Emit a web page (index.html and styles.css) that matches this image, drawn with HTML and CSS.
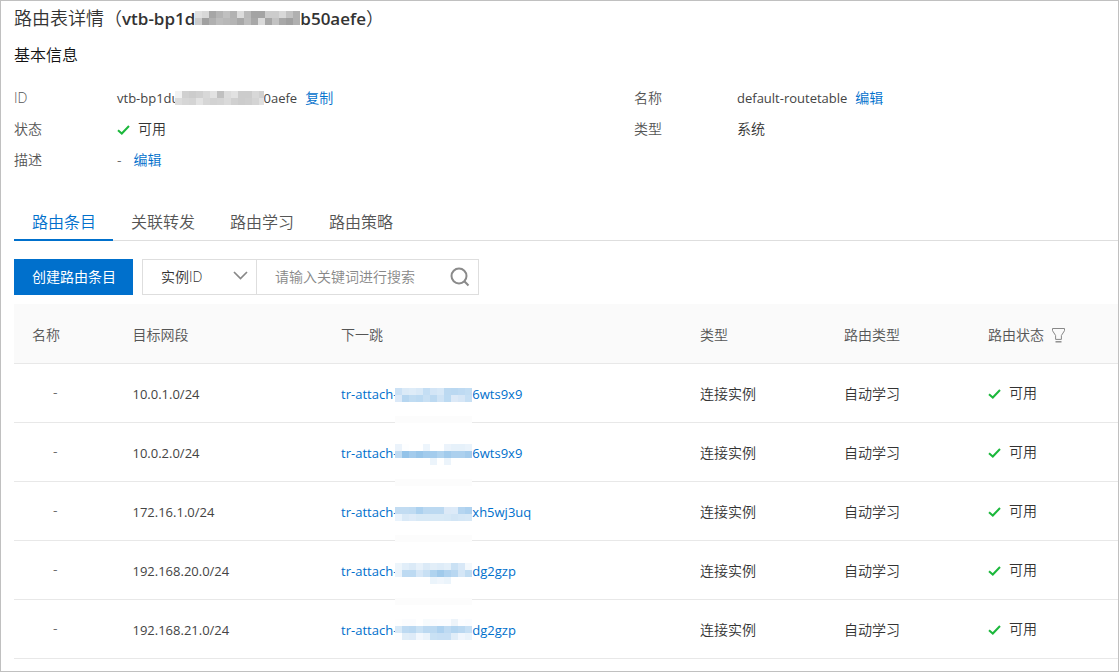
FILE: index.html
```
<!DOCTYPE html>
<html lang="zh-CN">
<head>
<meta charset="utf-8">
<title>路由表详情</title>
<link rel="stylesheet" href="styles.css">
<script src="masks.js" defer></script>
</head>
<body>
<svg class="sprite">
  <symbol id="tick" viewBox="0 0 13 10"><path d="M1 5.2 4.8 8.5 12 1" fill="none" stroke="#1cb83c" stroke-width="2"/></symbol>
</svg>
<main class="page">
  <h1 class="title">路由表详情（<b>vtb-bp1d</b><svg class="mask" data-mask="title" width="105" height="14"></svg><b>b50aefe</b>）</h1>
  <h2 class="section">基本信息</h2>

  <div class="info">
    <dl class="info-list">
      <div class="info-row"><dt>ID</dt><dd><span class="latin">vtb-bp1du</span><svg class="mask mask-over" data-mask="id" width="89" height="14"></svg><span class="latin">0aefe</span><a class="action" href="#">复制</a></dd></div>
      <div class="info-row"><dt>状态</dt><dd><svg class="tick"><use href="#tick"/></svg>可用</dd></div>
      <div class="info-row"><dt>描述</dt><dd>-<a class="action action-far" href="#">编辑</a></dd></div>
    </dl>
    <dl class="info-list">
      <div class="info-row"><dt>名称</dt><dd><span class="latin">default-routetable</span><a class="action" href="#">编辑</a></dd></div>
      <div class="info-row"><dt>类型</dt><dd>系统</dd></div>
    </dl>
  </div>

  <nav class="tabs">
    <a class="tab tab-active" href="#">路由条目</a>
    <a class="tab" href="#">关联转发</a>
    <a class="tab" href="#">路由学习</a>
    <a class="tab" href="#">路由策略</a>
  </nav>

  <div class="toolbar">
    <button class="create" type="button">创建路由条目</button>
    <form class="search">
      <div class="field-pick">
        <select class="field" aria-label="搜索字段"><option>实例ID</option></select>
        <svg class="chevron" viewBox="0 0 15 9"><path d="M1 1l6.5 6.5L14 1" fill="none" stroke="#888" stroke-width="1.7"/></svg>
      </div>
      <input class="query" type="text" aria-label="搜索" placeholder="请输入关键词进行搜索">
      <button class="go" type="button" aria-label="搜索"><svg width="20" height="20" viewBox="0 0 20 20"><g fill="none" stroke="#8a8a8a" stroke-width="2"><circle cx="9" cy="9" r="7.5"/><path d="M14.3 14.3 18.5 18.5"/></g></svg></button>
    </form>
  </div>

  <table class="routes">
    <colgroup><col class="c-name"><col class="c-cidr"><col class="c-hop"><col class="c-type"><col class="c-kind"><col class="c-status"></colgroup>
    <thead>
      <tr><th>名称</th><th>目标网段</th><th>下一跳</th><th>类型</th><th>路由类型</th><th>路由状态<svg class="filter" width="13" height="15" viewBox="0 0 13 15"><g fill="none" stroke="#888"><path d="M.5.5h12v2.2L9.4 7.5v3.9H3.6V7.5L.5 2.7z"/><path d="M3.5 13.8h6" stroke-width="1.4"/></g></svg></th></tr>
    </thead>
    <tbody>
      <tr><td class="empty">-</td><td class="latin">10.0.1.0/24</td><td class="latin"><a class="hop" href="#">tr-attach-<svg class="mask" data-mask="r1" width="77" height="14"></svg>6wts9x9</a></td><td>连接实例</td><td>自动学习</td><td class="status"><svg class="tick"><use href="#tick"/></svg>可用</td></tr>
      <tr><td class="empty">-</td><td class="latin">10.0.2.0/24</td><td class="latin"><a class="hop" href="#">tr-attach-<svg class="mask" data-mask="r2" width="77" height="14"></svg>6wts9x9</a></td><td>连接实例</td><td>自动学习</td><td class="status"><svg class="tick"><use href="#tick"/></svg>可用</td></tr>
      <tr><td class="empty">-</td><td class="latin">172.16.1.0/24</td><td class="latin"><a class="hop" href="#">tr-attach-<svg class="mask" data-mask="r3" width="77" height="14"></svg>xh5wj3uq</a></td><td>连接实例</td><td>自动学习</td><td class="status"><svg class="tick"><use href="#tick"/></svg>可用</td></tr>
      <tr><td class="empty">-</td><td class="latin">192.168.20.0/24</td><td class="latin"><a class="hop" href="#">tr-attach-<svg class="mask" data-mask="r4" width="77" height="14"></svg>dg2gzp</a></td><td>连接实例</td><td>自动学习</td><td class="status"><svg class="tick"><use href="#tick"/></svg>可用</td></tr>
      <tr><td class="empty">-</td><td class="latin">192.168.21.0/24</td><td class="latin"><a class="hop" href="#">tr-attach-<svg class="mask" data-mask="r5" width="77" height="14"></svg>dg2gzp</a></td><td>连接实例</td><td>自动学习</td><td class="status"><svg class="tick"><use href="#tick"/></svg>可用</td></tr>
    </tbody>
  </table>
</main>
</body>
</html>
```
FILE: styles.css
```
* { box-sizing: border-box; }
body {
  margin: 0;
  font: 350 14px/20px "Open Sans", "Noto Sans CJK SC", sans-serif;
  color: #333;
  background: #fff;
}
button, input, select { font: inherit; color: inherit; }
a { color: #0070cc; text-decoration: none; }
.sprite { display: none; }
.page {
  min-height: 100vh;
  padding: 4px 0 12px 13px;
  border: 1px solid #c0c0c0;
}
.title { margin: 0; font-size: 18px; line-height: 26px; font-weight: 350; }
.title b { font-size: 17px; font-weight: 600; }
.section { margin: 11px 0 15px; font-size: 16px; line-height: 24px; font-weight: 350; color: #111; }
.latin { font-size: 13px; font-weight: 400; color: #444; }

.mask { position: relative; height: 14px; vertical-align: -2px; overflow: visible; }
.title .mask { vertical-align: 0; }
.mask-over { margin-left: -5px; }
.hop .mask { margin-left: -2px; vertical-align: -3px; }

.info { display: grid; grid-template-columns: 620fr 484fr; }
.info-list { margin: 0; }
.info-row { display: flex; align-items: center; height: 31px; }
dt { width: 103px; color: #555; }
dd { margin: 0; }
.action { margin-left: 8px; }
.action-far { margin-left: 12px; }
.tick { width: 13px; height: 10px; margin-right: 8px; vertical-align: -1px; }

.tabs { display: flex; margin-top: 30px; border-bottom: 1px solid #dedede; }
.tab {
  padding: 0 17px 0 18px;
  margin-bottom: -1px;
  border-bottom: 2px solid transparent;
  font-size: 16px;
  line-height: 34px;
  color: #555;
}
.tab-active { color: #0070cc; border-color: #0070cc; }

.toolbar { display: flex; gap: 9px; margin: 18px 0 9px; height: 36px; }
.create { padding: 0 17px 0 18px; border: 0; background: #0070cc; color: #fff; font-weight: 400; }
.search { display: flex; border: 1px solid #dedede; }
.field-pick { display: grid; align-items: center; width: 114px; border-right: 1px solid #dedede; }
.field-pick > * { grid-area: 1 / 1; }
.field { height: 100%; padding: 0 18px; border: 0; appearance: none; background: none; }
.chevron { justify-self: end; width: 15px; height: 9px; margin: 0 8px 4px 0; pointer-events: none; }
.query { width: 192px; padding: 0 0 0 18px; border: 0; background: none; }
.query::placeholder { color: #888; opacity: 1; }
.go { display: flex; align-items: center; padding: 0 8px 0 1px; border: 0; background: none; }

.routes { width: 100%; table-layout: fixed; border-collapse: separate; border-spacing: 0; }
.c-name { width: 9.1%; }
.c-cidr { width: 18.9%; }
.c-hop { width: 32.5%; }
.c-type { width: 13.05%; }
.c-kind { width: 13.05%; }
.routes th, .routes td {
  height: 59px;
  padding: 2px 0 0 18px;
  border-bottom: 1px solid #e8e8e8;
  text-align: left;
  font-weight: 350;
  white-space: nowrap;
}
.routes th { height: 60px; background: #fafafa; color: #555; }
.routes td.latin { font-weight: 400; }
.routes td.empty { padding: 0 0 2px 39px; }
.routes td.status { padding-top: 0; }
.filter { margin-left: 8px; vertical-align: -3px; }
```
FILE: masks.js
```
// Tile rows for each redacted stretch of an identifier; every tile is 7px square.
const masks = {
  title: { y: 0, rows: [
    'e0e0e0 d8d8d8 a6a6a6 b4b4b4 c0c0c0 b2b2b2 dcdcdc bababa a4a4a4 a4a4a4 cccccc cccccc d8d8d8 c2c2c2 b0b0b0',
    'cccccc a0a0a0 b0b0b0 bcbcbc b8b8b8 b4b4b4 a8a8a8 bcbcbc a8a8a8 dadada a6a6a6 c2c2c2 a8a8a8 a0a0a0 b0b0b0'] },
  id: { y: 0, rows: [
    'f2f2f2 d0d0d0 cccccc d0d0d0 d8d8d8 e2e2e2 c0c0c0 dcdcdc e2e2e2 cccccc cccccc d8d8d8 d0d0d0',
    'dcdcdc d6d6d6 d4d4d4 e2e2e2 d6d6d6 d2d2d2 d4d4d4 dadada d0d0d0 cccccc cecece d4d4d4 e0e0e0'] },
  r1: { y: 0, strip: 28, rows: [
    'cbe1f5 dbeaf7 deecf8 d9e9f7 c4def4 d3e5f6 d7e8f7 bcd9f1 bad8f1 bedaf2 c2ddf3',
    'dbe9f8 b6d6f0 c0dcf2 bcdaf2 c8e0f4 bcd9f1 cfe3f5 bcdaf2 dce9f7 d6e6f6 c6dff4'] },
  r2: { y: -3, strip: 32, rows: [
    'ebf3fb fdfeff ffffff ffffff edf5fc ffffff ffffff ebf3fb e6f1fa e6f1fa eaf3fb',
    'bfdbf2 93c3e9 a3cbec 98c5e9 a2cbec a4cced b0d3ef a2cbec acd0ee acd0ee a3cbec',
    'ffffff ffffff ffffff ffffff ffffff ecf4fb ffffff ecf4fb ffffff ffffff ffffff'] },
  r3: { y: 1, strip: 29, rows: [
    'c2dcf2 c2dcf2 bfdbf2 acd1ef bcd9f1 bcd9f1 bcd9f1 dce9f7 dceaf8 b5d5f0 add1ef',
    'e9f3fc d9e9f7 deebf8 d8e9f6 d8e9f6 d8e9f6 d8e9f6 d6e8f6 d2e5f5 d5e7f6 d7e8f6'] },
  r4: { y: -2, strip: 33, rows: [
    'edf5fb e1eef9 dbeaf7 e7f1fa dbeaf7 e2eef8 deecf8 e3eff9 cae1f4 d8e8f7 f3f8fc',
    'ebf3fb bddaf2 bddaf2 d6e7f7 c8e0f4 afd3ef a0caeb afd2ef b8d7f1 d4e6f6 c0dcf2',
    'ffffff ffffff ffffff ffffff ffffff ebf4fb f0f6fc ebf4fb ffffff ffffff ffffff'] },
  r5: { y: -5, rows: [
    'fefefe fbfcfe fbfcfe ffffff f7fbfd f9fbfe fafcff fafcff edf4fa fcfdff fafcff',
    'd8e9f7 bedaf2 bad8f1 c9e1f4 bcd9f1 bcd9f1 add1ef bedaf2 b3d5f0 bad8f1 c6dff4',
    'fcfdff e0edf8 deebf8 f2f7fd eaf3fb c9e1f4 c7dff4 c7dff4 e0edf8 f0f6fd eaf3fb'] }
};
const TILE = 7;
for (const svg of document.querySelectorAll('[data-mask]')) {
  const { y, rows, strip } = masks[svg.dataset.mask];
  const width = svg.width.baseVal.value;
  const rect = (x, top, w, fill) =>
    `<rect x="${x}" y="${top}" width="${w}" height="${TILE}" fill="${fill}"/>`;
  let out = rows.map((row, r) => row.split(' ').map((color, c) =>
    rect(c * TILE, y + r * TILE, Math.min(TILE, width - c * TILE), '#' + color)).join('')).join('');
  if (strip) out += rect(0, strip, width, '#fcfcfc');
  svg.innerHTML = out;
}
```
